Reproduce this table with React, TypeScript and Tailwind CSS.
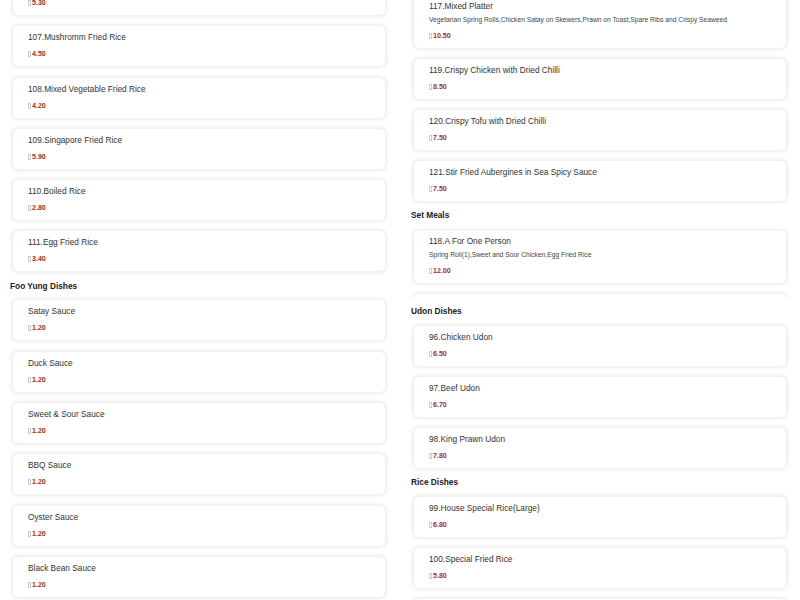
import React from "react";

type Dish = { name: string; price: string; desc?: string };
type Section = { title?: string; items: Dish[]; clipHeight?: number };

const LEFT: Section[] = [
  {
    items: [
      { name: "106.Chicken Fried Rice", price: "5.30" },
      { name: "107.Mushromm Fried Rice", price: "4.50" },
      { name: "108.Mixed Vegetable Fried Rice", price: "4.20" },
      { name: "109.Singapore Fried Rice", price: "5.90" },
      { name: "110.Boiled Rice", price: "2.80" },
      { name: "111.Egg Fried Rice", price: "3.40" },
    ],
  },
  {
    title: "Foo Yung Dishes",
    items: [
      { name: "Satay Sauce", price: "1.20" },
      { name: "Duck Sauce", price: "1.20" },
      { name: "Sweet & Sour Sauce", price: "1.20" },
      { name: "BBQ Sauce", price: "1.20" },
      { name: "Oyster Sauce", price: "1.20" },
      { name: "Black Bean Sauce", price: "1.20" },
    ],
  },
];

const RIGHT: Section[] = [
  {
    items: [
      {
        name: "117.Mixed Platter",
        desc: "Vegetarian Spring Rolls,Chicken Satay on Skewers,Prawn on Toast,Spare Ribs and Crispy Seaweed",
        price: "10.50",
      },
      { name: "119.Crispy Chicken with Dried Chilli", price: "8.50" },
      { name: "120.Crispy Tofu with Dried Chilli", price: "7.50" },
      { name: "121.Stir Fried Aubergines in Sea Spicy Sauce", price: "7.50" },
    ],
  },
  {
    title: "Set Meals",
    clipHeight: 69,
    items: [
      {
        name: "118.A For One Person",
        desc: "Spring Roll(1),Sweet and Sour Chicken,Egg Fried Rice",
        price: "12.00",
      },
      {
        name: "118.B For Two Persons",
        desc: "Spring Rolls(2),Sweet and Sour Chicken,Beef with Black Bean Sauce,Egg Fried Rice",
        price: "22.00",
      },
    ],
  },
  {
    title: "Udon Dishes",
    items: [
      { name: "96.Chicken Udon", price: "6.50" },
      { name: "97.Beef Udon", price: "6.70" },
      { name: "98.King Prawn Udon", price: "7.80" },
    ],
  },
  {
    title: "Rice Dishes",
    items: [
      { name: "99.House Special Rice(Large)", price: "6.80" },
      { name: "100.Special Fried Rice", price: "5.80" },
      { name: "101.Chicken Fried Rice", price: "5.30" },
    ],
  },
];

function DishCard({ dish }: { dish: Dish }) {
  return (
    <div className="shrink-0 rounded-[6px] border border-[#f0f0f0] bg-white pl-[15px] pr-3 pt-[6px] pb-[8px] shadow-[0_0_4px_rgba(0,0,0,0.12)]">
      <div className="h-[10px] text-[8.3px] leading-[10px] text-[#333] whitespace-nowrap">{dish.name}</div>
      {dish.desc && (
        <div className="mt-[5px] h-[8px] text-[6.7px] leading-[8px] text-[#444] whitespace-nowrap">{dish.desc}</div>
      )}
      <div className="mt-[8px] flex h-[8px] items-center text-[7.1px] font-bold leading-[8px] text-[#a0302a]">
        <span className="mr-[1px] inline-block h-[6px] w-[3px] border border-[#ccc]" />
        {dish.price}
      </div>
    </div>
  );
}

function Column({ sections, className, listGap }: { sections: Section[]; className: string; listGap: string }) {
  return (
    <div className={`flex w-[378px] flex-col ${className}`}>
      {sections.map((s, i) => (
        <div key={i} className="flex flex-col">
          {s.title && (
            <div className="flex h-[27px] items-center text-[8.3px] font-bold text-[#222]">{s.title}</div>
          )}
          <div
            className={`flex flex-col px-[2px] ${listGap}`}
            style={s.clipHeight ? { height: s.clipHeight, overflow: "hidden" } : undefined}
          >
            {s.items.map((d) => (
              <DishCard key={d.name} dish={d} />
            ))}
          </div>
        </div>
      ))}
    </div>
  );
}

export default function App() {
  return (
    <div className="h-[600px] w-[800px] overflow-hidden bg-white font-['Liberation_Sans',Arial,sans-serif]">
      <div className="flex gap-[23px] pl-[10px]">
        <Column sections={LEFT} className="mt-[-26px]" listGap="gap-[9.3px]" />
        <Column sections={RIGHT} className="mt-[-6px]" listGap="gap-[9px]" />
      </div>
    </div>
  );
}
